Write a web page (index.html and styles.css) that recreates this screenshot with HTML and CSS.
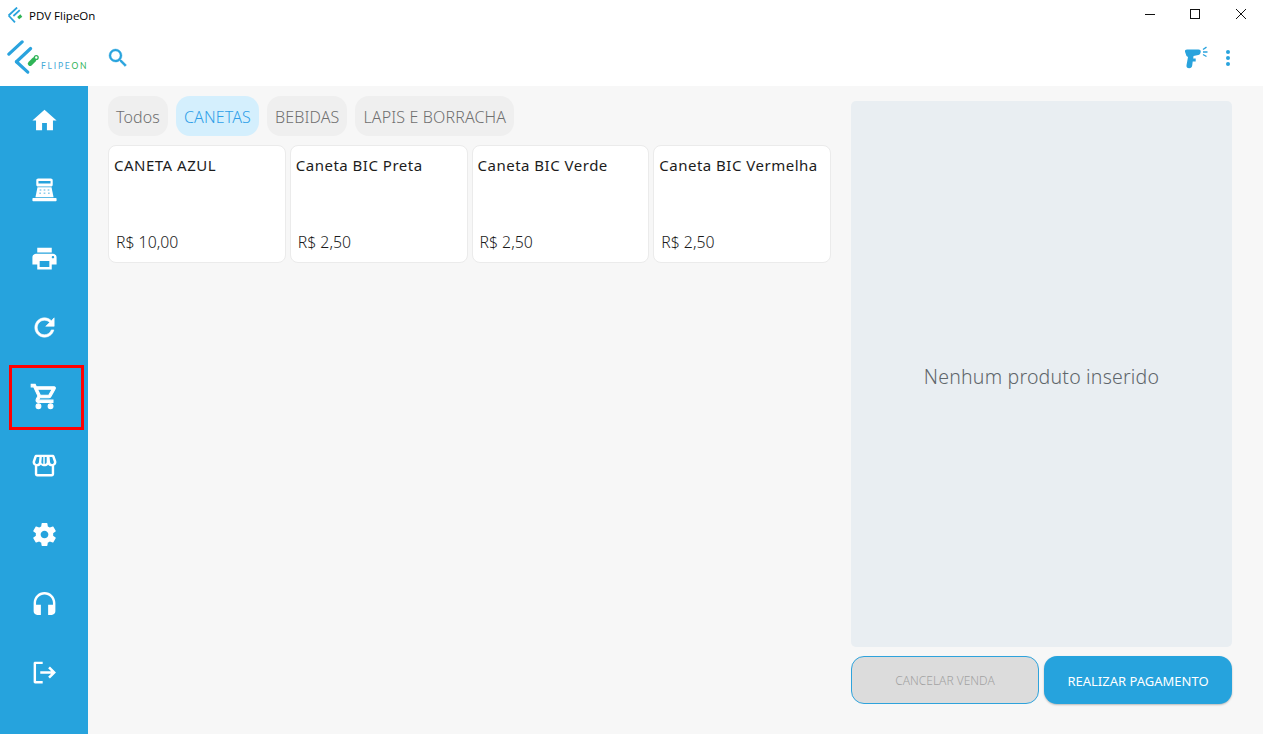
FILE: index.html
```html
<!DOCTYPE html>
<html lang="pt-BR">
<head>
<meta charset="utf-8">
<title>PDV FlipeOn</title>
<link rel="stylesheet" href="styles.css">
</head>
<body>
<div class="app">
  <div class="titlebar">
    <div class="title-left">
      <svg class="title-logo" viewBox="0 0 16 16"><path d="M9.500 .5 1.500 8M12 3 6 8.500" stroke="#29a3dd" stroke-width="1.700" fill="none"/><path d="M1.500 8 7.500 14.500" stroke="#29a3dd" stroke-width="1.700" fill="none"/><path d="M10.500 10.500 13.500 8" stroke="#2fb457" stroke-width="2.800" fill="none"/></svg>
      <span class="title-text">PDV FlipeOn</span>
    </div>
    <div class="winctrls">
      <svg class="winbtn" viewBox="1 0 45 30"><path d="M18 14.500h10" stroke="#111" stroke-width="1"/></svg>
      <svg class="winbtn" viewBox="1 0 45 30"><rect x="18.500" y="9.500" width="9" height="9" fill="none" stroke="#111" stroke-width="1"/></svg>
      <svg class="winbtn" viewBox="1 0 45 30"><path d="M19 9l10 10M29 9 19 19" stroke="#111" stroke-width="1"/></svg>
    </div>
  </div>
  <header class="header">
    <div class="brand">
      <svg class="brand-mark" viewBox="0 0 36 36"><g fill="none" stroke="#2aa3de" stroke-width="3.400" stroke-linecap="round"><path d="M16 2 2 15"/><path d="M25 9 10 23"/><path d="M10 23 22 34"/></g><path d="M24.500 25 28.500 21" stroke="#2fb457" stroke-width="5" stroke-linecap="round"/><circle cx="31" cy="18.500" r="2" fill="#fff" stroke="#2fb457" stroke-width="1.400"/></svg>
      <span class="brand-name">FLIPE<b>ON</b></span>
    </div>
    <svg class="search" viewBox="0 0 24 24"><path d="M15.500 14h-.79l-.28-.27A6.470 6.470 0 0 0 16 9.500 6.500 6.500 0 1 0 9.500 16c1.610 0 3.090-.59 4.230-1.570l.27.28v.79l5 4.990L20.490 19l-4.990-5zm-6 0C7.010 14 5 11.990 5 9.500S7.010 5 9.500 5 14 7.010 14 9.500 11.990 14 9.500 14z"/></svg>
    <div class="header-actions">
      <svg class="scanner" viewBox="0 0 26 24"><path d="M4 3.500h11.500c1.800 0 2.500 1 2.200 2.400-.3 1.700-1 2.700-2.500 3L10.500 10l-.3 2.400h2.500v3H9.700L9.200 19.500c-.3 1.800-1.300 2.800-3 2.800-1.900 0-3-1.300-2.700-3.100L5 11 3.500 10 2 5.700C1.700 4.400 2.700 3.500 4 3.500z"/><path d="M20 3.500 23.500 1.200M20 6h4.500M20 8.500l3.500 2" fill="none" stroke="#29a3dd" stroke-width="1.400"/></svg>
      <svg class="kebab" viewBox="0 0 6 18"><circle cx="3" cy="3" r="2"/><circle cx="3" cy="9" r="2"/><circle cx="3" cy="15" r="2"/></svg>
    </div>
  </header>
  <div class="body">
    <nav class="sidebar">
      <a class="navitem"><svg class="ico" viewBox="0 0 24 24"><path d="M10 20v-6h4v6h5v-8h3L12 3 2 12h3v8z"/></svg></a>
      <a class="navitem"><svg class="ico" viewBox="0 0 24 24"><path fill-rule="evenodd" d="M6.800 2.800h10.400c1 0 1.600.6 1.600 1.500V8c0 .9-.6 1.500-1.600 1.500H6.800C5.800 9.500 5.200 8.900 5.200 8V4.300c0-.9.6-1.500 1.600-1.500zM7 5v2h10V5z"/><path d="M6.200 10.200h11.600l1.700 8.300h-15z"/><rect x="2" y="19" width="20" height="2.800" rx=".6"/><path class="keys" d="M8 11.800h1.400v1.200H8zm3.300 0h1.400v1.200h-1.400zm3.300 0H16v1.200h-1.400zM7.700 14.500h1.400v1.200H7.700zm3.600 0h1.400v1.200h-1.400zm3.600 0h1.400v1.200h-1.400z"/></svg></a>
      <a class="navitem"><svg class="ico" viewBox="0 0 24 24"><path d="M19 8H5c-1.660 0-3 1.340-3 3v6h4v4h12v-4h4v-6c0-1.660-1.340-3-3-3zm-3 11H8v-5h8v5zm3-7c-.55 0-1-.45-1-1s.45-1 1-1 1 .45 1 1-.45 1-1 1zm-1-9H6v4h12V3z"/></svg></a>
      <a class="navitem"><svg class="ico ico-heavy" viewBox="0 0 24 24"><path d="M17.650 6.350C16.200 4.900 14.210 4 12 4c-4.420 0-7.990 3.580-7.990 8s3.570 8 7.990 8c3.730 0 6.840-2.550 7.730-6h-2.080c-.82 2.330-3.040 4-5.650 4-3.310 0-6-2.690-6-6s2.690-6 6-6c1.660 0 3.140.69 4.220 1.780L13 11h7V4l-2.350 2.350z"/></svg></a>
      <a class="navitem is-marked"><svg class="ico ico-cart" viewBox="0 0 24 24"><path fill-rule="evenodd" d="M15.550 13c.75 0 1.410-.41 1.750-1.030l3.580-6.490c.37-.66-.11-1.480-.87-1.480H5.210l-.94-2H1v2h2l3.600 7.590-1.350 2.440C4.520 15.370 5.480 17 7 17h12v-2H7l1.100-2h7.450zM6.160 6h12.150l-2.760 5H8.530L6.160 6zM7 18c-1.100 0-1.990.9-1.990 2S5.900 22 7 22s2-.9 2-2-.9-2-2-2zm10 0c-1.100 0-1.990.9-1.990 2s.89 2 1.990 2 2-.9 2-2-.9-2-2-2z"/></svg></a>
      <a class="navitem"><svg class="ico" viewBox="0 0 24 24"><path fill-rule="evenodd" d="M5.500 3h13c.9 0 1.500.4 1.800 1.200l1.500 4.300c.3 1.600-.5 3-1.800 3.600V19c0 1.200-.8 2-2 2H6c-1.200 0-2-.8-2-2v-6.900C2.700 11.500 1.900 10.100 2.200 8.500l1.500-4.300C4 3.400 4.600 3 5.500 3zM6 12.600V19h12v-6.400c-1.100 0-2.100-.5-3-1.300-.8.800-1.900 1.300-3 1.300s-2.200-.5-3-1.300c-.9.800-1.900 1.300-3 1.300zM5.600 5 4.200 9c-.1 1 .7 1.700 1.600 1.700.9 0 1.500-.7 1.600-1.600L7.800 5zm4.200 0-.4 4.300c0 .8.700 1.400 1.600 1.400V5zm2.400 0v5.700c.9 0 1.500-.6 1.600-1.400L13.800 5zm4 0 .4 4.100c.1.900.7 1.600 1.600 1.600.9 0 1.700-.7 1.600-1.700L18.400 5z"/></svg></a>
      <a class="navitem"><svg class="ico" viewBox="0 0 24 24"><path d="M19.140 12.940c.04-.3.06-.61.06-.94 0-.32-.02-.64-.07-.94l2.030-1.580c.18-.14.23-.41.12-.61l-1.920-3.320c-.12-.22-.37-.29-.59-.22l-2.390.96c-.5-.38-1.030-.7-1.620-.94l-.36-2.540c-.04-.24-.24-.41-.48-.41h-3.840c-.24 0-.43.17-.47.41l-.36 2.540c-.59.24-1.130.57-1.620.94l-2.390-.96c-.22-.08-.47 0-.59.22L2.740 8.870c-.12.21-.08.47.12.61l2.030 1.580c-.05.3-.09.63-.09.94s.02.64.07.94l-2.030 1.580c-.18.14-.23.41-.12.61l1.920 3.320c.12.22.37.29.59.22l2.390-.96c.5.38 1.030.7 1.620.94l.36 2.540c.05.24.24.41.48.41h3.840c.24 0 .44-.17.47-.41l.36-2.540c.59-.24 1.130-.56 1.620-.94l2.390.96c.22.08.47 0 .59-.22l1.920-3.320c.12-.22.07-.47-.12-.61l-2.010-1.580zM12 15.200c-1.760 0-3.200-1.440-3.200-3.200s1.440-3.200 3.200-3.200 3.200 1.440 3.200 3.200-1.440 3.200-3.200 3.200z"/></svg></a>
      <a class="navitem"><svg class="ico" viewBox="0 0 24 24"><path d="M12 2.500c-4.970 0-9 4.030-9 9v7c0 1.660 1.340 3 3 3h3v-8.500H5v-1.500c0-3.870 3.130-7 7-7s7 3.130 7 7V13h-4v8.500h3c1.660 0 3-1.340 3-3v-7c0-4.970-4.030-9-9-9z"/></svg></a>
      <a class="navitem"><svg class="ico" viewBox="0 0 24 24"><path d="M10.500 3H4.200C3.500 3 3 3.500 3 4.200v15.600c0 .7.500 1.200 1.200 1.200h6.300v-2H5V5h5.500zM16.500 7l-1.500 1.500 2.500 2.500H8.500v2h9L15 15.500l1.500 1.500 5-5z"/></svg></a>
    </nav>
    <main class="main">
      <section class="catalog">
        <div class="tabs">
          <button class="tab">Todos</button>
          <button class="tab is-active">CANETAS</button>
          <button class="tab">BEBIDAS</button>
          <button class="tab">LAPIS E BORRACHA</button>
        </div>
        <div class="products">
          <article class="card"><h3 class="card-name">CANETA AZUL</h3><p class="card-price">R$ 10,00</p></article>
          <article class="card"><h3 class="card-name">Caneta BIC Preta</h3><p class="card-price">R$ 2,50</p></article>
          <article class="card"><h3 class="card-name">Caneta BIC Verde</h3><p class="card-price">R$ 2,50</p></article>
          <article class="card"><h3 class="card-name">Caneta BIC Vermelha</h3><p class="card-price">R$ 2,50</p></article>
        </div>
      </section>
      <aside class="order">
        <div class="order-panel">Nenhum produto inserido</div>
        <div class="order-actions">
          <button class="btn btn-cancel">CANCELAR VENDA</button>
          <button class="btn btn-pay">REALIZAR PAGAMENTO</button>
        </div>
      </aside>
    </main>
  </div>
</div>
</body>
</html>
```
FILE: styles.css
```css
*, *::before, *::after { box-sizing: border-box; }
html, body { margin: 0; height: 100%; overflow: hidden; }
body { font-family: "Noto Sans", "Open Sans", sans-serif; background: #fff; }
.app { display: flex; flex-direction: column; height: 734px; }

.titlebar { height: 30px; display: flex; justify-content: space-between; background: #fff; flex: none; }
.title-left { display: flex; align-items: center; gap: 5px; padding-left: 7px; }
.title-logo { width: 17px; height: 17px; }
.title-text { font-size: 11.500px; color: #000; font-family: "Open Sans", sans-serif; }
.winctrls { display: flex; }
.winbtn { width: 45px; height: 30px; }

.header { height: 56px; flex: none; display: flex; align-items: center; background: #fff; }
.brand { width: 88px; height: 56px; flex: none; display: flex; align-items: flex-end; padding: 0 0 15px 7px; }
.brand-mark { width: 34px; height: 36px; flex: none; margin-bottom: -4px; }
.brand-name { font-family: "Lato", sans-serif; font-size: 8.500px; letter-spacing: 1.800px; color: #43a9d6; line-height: 9px; white-space: nowrap; }
.brand-name b { color: #2fb457; font-weight: 400; }
.search { width: 24px; height: 24px; fill: #29a3dd; stroke: #29a3dd; stroke-width: .4; margin-left: 18px; }
.header-actions { margin-left: auto; display: flex; align-items: center; margin-right: 32px; gap: 16px; }
.scanner { width: 26px; height: 24px; fill: #29a3dd; }
.kebab { width: 6px; height: 18px; fill: #29a3dd; }

.body { flex: 1; display: flex; min-height: 0; }
.sidebar { width: 88px; flex: none; background: #26a3dd; display: flex; flex-direction: column; }
.navitem { height: 69px; flex: none; display: flex; align-items: center; justify-content: center; position: relative; }
.ico { width: 29px; height: 29px; fill: #fff; }
.ico-heavy { stroke: #fff; stroke-width: .5; }
.ico-cart { stroke: #fff; stroke-width: .9; }
.ico .keys { fill: #8ecdeb; }
.navitem.is-marked::after { content: ""; position: absolute; left: 9px; top: 3px; width: 75px; height: 65px; border: 3px solid #f00; }

.main { flex: 1; display: flex; background: #f7f7f7; padding-left: 20px; padding-right: 31px; gap: 20px; min-width: 0; }
.catalog { flex: 1; min-width: 0; padding-top: 10px; }
.tabs { display: flex; gap: 8px; height: 40px; }
.tab { border: 0; height: 40px; padding: 2px 8px 0; border-radius: 14px; background: #efefef; color: #707070; font: 350 16px "Noto Sans", sans-serif; letter-spacing: .13px; }
.tab.is-active { background: #d4effd; color: #2f9fe8; }
.products { display: grid; grid-template-columns: repeat(4, 1fr); gap: 4px; margin-top: 9px; }
.card { height: 118px; background: #fff; border: 1px solid #ebebeb; border-radius: 8px; padding: 8px 5px 9px 5px; display: flex; flex-direction: column; justify-content: space-between; }
.card-name { margin: 0; font-size: 15px; font-weight: 450; letter-spacing: .5px; color: #1c1c1c; line-height: 22px; white-space: nowrap; }
.card-price { margin: 0 0 0 2px; font-size: 15.800px; font-weight: 300; color: #1c1c1c; line-height: 22px; }

.order { width: 381px; flex: none; display: flex; flex-direction: column; gap: 9px; padding: 15px 0 30px; }
.order-panel { flex: 1; background: #e9eef2; border-radius: 5px; display: flex; align-items: center; justify-content: center; font-size: 19.500px; font-weight: 300; color: #5f666b; padding-top: 4px; letter-spacing: .2px; }
.order-actions { display: flex; gap: 5px; height: 48px; }
.btn { border-radius: 13px; font-family: "Noto Sans", sans-serif; font-size: 13px; }
.btn-cancel { flex: 0 0 188px; background: #dcdcdc; border: 1px solid #2ea3dc; color: #a2a2a2; font-size: 12px; font-weight: 300; }
.btn-pay { flex: 1; background: #26a3dd; border: 0; padding-top: 2px; color: #fff; box-shadow: 0 1px 2px rgba(0,0,0,.25); }
```
